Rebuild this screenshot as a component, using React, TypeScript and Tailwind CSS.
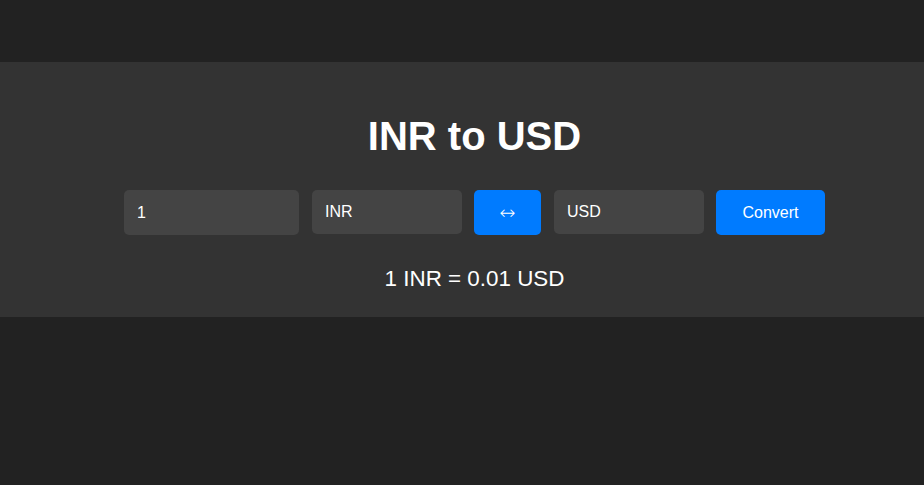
import { useState } from 'react'

const rates: Record<string, number> = { INR: 1, USD: 0.012 }

export default function App() {
  const [amount, setAmount] = useState('1')
  const [from, setFrom] = useState('INR')
  const [to, setTo] = useState('USD')

  const result = ((parseFloat(amount) || 0) * (rates[to] / rates[from])).toFixed(2)

  return (
    <div className="min-h-[485px] bg-[#222222] pt-[62px] text-white font-['Liberation_Sans',Arial,sans-serif]">
      <div className="flex flex-col items-center bg-[#333333] pt-[51px] pb-[26px] pl-[25px]">
        <h1 className="text-[40px] leading-[46px] font-bold">
          {from} to {to}
        </h1>

        <div className="mt-[31px] flex items-start">
          <input
            value={amount}
            onChange={(e) => setAmount(e.target.value)}
            className="h-[45px] w-[175px] rounded-[5px] bg-[#444444] pl-[13px] pr-3 text-[16px] text-white outline-none"
          />
          <select
            value={from}
            onChange={(e) => setFrom(e.target.value)}
            className="ml-[13px] h-[44px] w-[150px] appearance-none rounded-[5px] bg-[#444444] pl-[13px] pr-3 text-[16px] text-white outline-none"
          >
            <option value="INR">INR</option>
            <option value="USD">USD</option>
          </select>
          <button
            onClick={() => {
              setFrom(to)
              setTo(from)
            }}
            className="ml-[12px] h-[45px] w-[67px] rounded-[5px] bg-[#007bff] font-['DejaVu_Sans',sans-serif] text-[19px] font-extralight text-white"
          >
            ↔
          </button>
          <select
            value={to}
            onChange={(e) => setTo(e.target.value)}
            className="ml-[13px] h-[44px] w-[150px] appearance-none rounded-[5px] bg-[#444444] pl-[13px] pr-3 text-[16px] text-white outline-none"
          >
            <option value="USD">USD</option>
            <option value="INR">INR</option>
          </select>
          <button className="ml-[12px] h-[45px] w-[109px] rounded-[5px] bg-[#007bff] text-[16px] text-white">
            Convert
          </button>
        </div>

        <p className="mt-[31px] text-[22.4px] leading-[25px]">
          {amount} {from} = {result} {to}
        </p>
      </div>
    </div>
  )
}
